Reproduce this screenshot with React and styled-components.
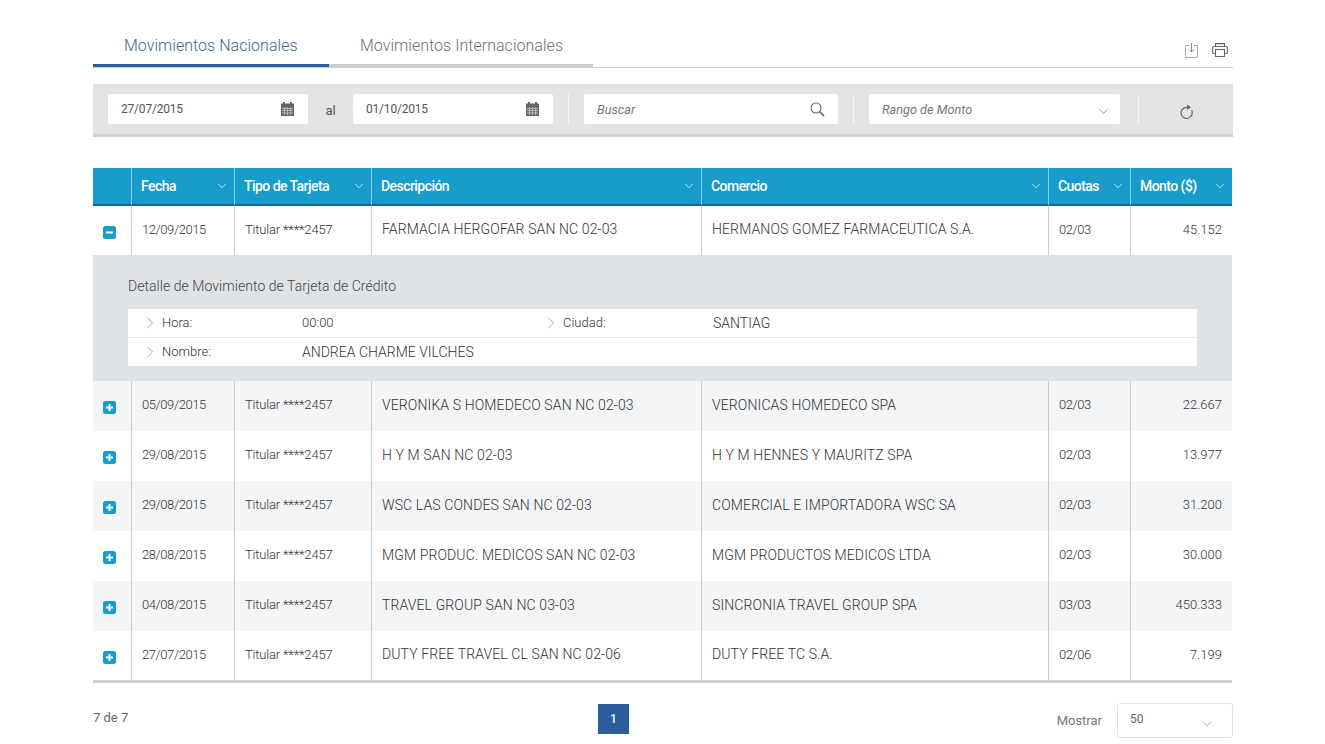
import styled, { createGlobalStyle } from 'styled-components';
import { ChevronDown, ChevronRight } from 'lucide-react';

const GlobalStyle = createGlobalStyle`
    body {
        margin: 0;
        background: #fff;
        font-family: Roboto, "Liberation Sans", sans-serif;
        color: #555;
    }
`;

const Page = styled.div`
    width: 1140px;
    margin-left: 93px;
    padding-top: 24px;
`;

const TabBar = styled.div`
    box-sizing: border-box;
    display: flex;
    height: 44px;
    border-bottom: 1px solid #ccc;
`;

const Tab = styled.div`
    box-sizing: border-box;
    width: ${(p) => p.$width}px;
    height: 43px;
    padding: 12px 0 0 31px;
    font-size: 16px;
    font-weight: 300;
    letter-spacing: 0.03px;
    color: ${(p) => (p.$active ? '#41648f' : '#6f6f6f')};
    border-bottom: 3px solid ${(p) => (p.$active ? '#2b5c97' : '#ccc')};
`;

const Tools = styled.div`
    display: flex;
    align-items: center;
    gap: 14px;
    margin-left: auto;
    padding: 9px 5px 0 0;
`;

const FilterBar = styled.div`
    box-sizing: border-box;
    display: flex;
    align-items: center;
    height: 53px;
    margin-top: 16px;
    padding: 0 15px;
    background: #e3e4e6;
    border-bottom: 3px solid #d0d0d0;
`;

const Field = styled.div`
    box-sizing: border-box;
    display: flex;
    align-items: center;
    justify-content: space-between;
    flex: 0 0 ${(p) => p.$width}px;
    height: 30px;
    padding: 0 ${(p) => p.$pad}px 0 13px;
    background: #fff;
    border-radius: 2px;
    font-size: 12px;
    letter-spacing: -0.2px;
    color: #555;
`;

const PlaceholderField = styled(Field)`
    font-size: 12.7px;
    font-style: italic;
    letter-spacing: 0;
    color: #777;
`;

const FieldChevron = styled(ChevronDown)`
    margin-top: 4px;
    color: #555;
`;

const Al = styled.span`
    width: 45px;
    text-align: center;
    font-size: 13px;
    padding-top: 2px;
`;

const Divider = styled.div`
    width: 1px;
    height: 30px;
    margin: 0 ${(p) => p.$right}px 0 ${(p) => p.$left}px;
    background: #f7f7f7;
`;

const Refresh = styled.div`
    display: flex;
    padding: 5px 0 0 40px;
`;

const Table = styled.table`
    width: 1139px;
    margin-top: 31px;
    table-layout: fixed;
    border-collapse: separate;
    border-spacing: 0;
    border-bottom: 3px solid #d0d0d0;
    font-size: 13px;
`;

const HeadCell = styled.th`
    box-sizing: border-box;
    height: 38px;
    padding: 0 5px 0 9px;
    background: #179ccb;
    border-bottom: 2px solid #1c5f9e;
    border-left: ${(p) => (p.$first ? 'none' : '1px solid #8ccfe6')};
    color: #fff;
    font-size: 14px;
    font-weight: 500;
    letter-spacing: -0.55px;
    text-align: left;
`;

const HeadLabel = styled.div`
    display: flex;
    align-items: center;
    justify-content: space-between;
`;

const Row = styled.tr`
    background: ${(p) => (p.$shaded ? '#f4f5f7' : '#fff')};
`;

const Cell = styled.td`
    box-sizing: border-box;
    height: ${(p) => p.$height}px;
    padding: 0 10px 3px;
    border-left: 1px solid #ccc;
    font-weight: 300;
    color: #333;
    white-space: nowrap;
`;

const DateCell = styled(Cell)`
    letter-spacing: -0.42px;
`;

const CardCell = styled(Cell)`
    letter-spacing: -0.18px;
`;

const NameCell = styled(Cell)`
    font-size: 14px;
    letter-spacing: 0.12px;
`;

const AmountCell = styled(Cell)`
    text-align: right;
`;

const ToggleCell = styled.td`
    padding: 3px 0 0 10px;
    line-height: 0;
`;

const DetailCell = styled.td`
    box-sizing: border-box;
    height: 126px;
    padding: 0 35px;
    background: #e0e3e6;
    vertical-align: top;
`;

const DetailTitle = styled.div`
    padding: 23px 0 15px;
    font-size: 14px;
    font-weight: 300;
    line-height: 16px;
    letter-spacing: 0.05px;
    color: #444;
`;

const DetailBox = styled.div`
    background: #fff;
`;

const DetailRow = styled.div`
    box-sizing: border-box;
    display: grid;
    grid-template-columns: 401px 1fr;
    height: 28px;
    padding-left: 12px;
    & + & {
        height: 29px;
        border-top: 1px solid #e3e4e6;
    }
`;

const DetailItem = styled.div`
    display: flex;
    align-items: center;
    gap: 2px;
    padding-bottom: 1px;
    color: #4a4a4a;
`;

const DetailLabel = styled.span`
    width: ${(p) => p.$width}px;
    font-weight: 300;
    color: #333;
`;

const DetailValue = styled.span`
    font-size: ${(p) => (p.$small ? 13 : 14)}px;
    font-weight: 300;
    color: #333;
`;

const Footer = styled.div`
    display: grid;
    grid-template-columns: 505px 31px 1fr;
    align-items: center;
    margin-top: 20px;
    font-size: 13px;
`;

const Count = styled.span`
    padding-bottom: 7px;
    color: #666;
`;

const PageButton = styled.div`
    display: flex;
    align-items: center;
    justify-content: center;
    align-self: start;
    height: 30px;
    margin-top: 1px;
    background: #2b5c9c;
    color: #fff;
    font-size: 12px;
    font-weight: 500;
`;

const ShowBox = styled.div`
    display: flex;
    align-items: center;
    justify-content: flex-end;
    gap: 15px;
    color: #777;
`;

const ShowSelect = styled.div`
    box-sizing: border-box;
    display: flex;
    justify-content: space-between;
    width: 116px;
    height: 35px;
    padding: 8px 18px 0 12px;
    border: 1px solid #e3e3e3;
    border-radius: 3px;
    font-size: 12px;
    color: #666;
`;

const SelectChevron = styled(ChevronDown)`
    margin-top: 5px;
`;

const columns = [
    { title: '', width: 38 },
    { title: 'Fecha', width: 103 },
    { title: 'Tipo de Tarjeta', width: 137 },
    { title: 'Descripción', width: 330 },
    { title: 'Comercio', width: 347 },
    { title: 'Cuotas', width: 82 },
    { title: 'Monto ($)', width: 102 },
];

const movements = [
    { date: '12/09/2015', desc: 'FARMACIA HERGOFAR SAN NC 02-03', shop: 'HERMANOS GOMEZ FARMACEUTICA S.A.', fees: '02/03', amount: '45.152', height: 49, open: true },
    { date: '05/09/2015', desc: 'VERONIKA S HOMEDECO SAN NC 02-03', shop: 'VERONICAS HOMEDECO SPA', fees: '02/03', amount: '22.667', height: 50, shaded: true },
    { date: '29/08/2015', desc: 'H Y M SAN NC 02-03', shop: 'H Y M HENNES Y MAURITZ SPA', fees: '02/03', amount: '13.977', height: 50 },
    { date: '29/08/2015', desc: 'WSC LAS CONDES SAN NC 02-03', shop: 'COMERCIAL E IMPORTADORA WSC SA', fees: '02/03', amount: '31.200', height: 50, shaded: true },
    { date: '28/08/2015', desc: 'MGM PRODUC. MEDICOS SAN NC 02-03', shop: 'MGM PRODUCTOS MEDICOS LTDA', fees: '02/03', amount: '30.000', height: 50 },
    { date: '04/08/2015', desc: 'TRAVEL GROUP SAN NC 03-03', shop: 'SINCRONIA TRAVEL GROUP SPA', fees: '03/03', amount: '450.333', height: 50, shaded: true },
    { date: '27/07/2015', desc: 'DUTY FREE TRAVEL CL SAN NC 02-06', shop: 'DUTY FREE TC S.A.', fees: '02/06', amount: '7.199', height: 49 },
];

function CalendarIcon() {
    return (
        <svg width="13" height="14" viewBox="0 0 13 14" fill="#666">
            <rect x="2" y="0" width="2" height="3" />
            <rect x="9" y="0" width="2" height="3" />
            <rect x="0" y="1.5" width="13" height="12.5" />
            <g fill="#cfcfcf">
                <rect x="1" y="6" width="11" height="0.7" />
                <rect x="1" y="8.3" width="11" height="0.7" />
                <rect x="1" y="10.6" width="11" height="0.7" />
                <rect x="3" y="5" width="0.7" height="8" />
                <rect x="6.2" y="5" width="0.7" height="8" />
                <rect x="9.4" y="5" width="0.7" height="8" />
            </g>
        </svg>
    );
}

function SearchIcon() {
    return (
        <svg width="15" height="15" viewBox="0 0 15 15" fill="none" stroke="#666">
            <circle cx="6" cy="6" r="5" strokeWidth="1.1" />
            <path d="M9.7 9.7L14 14" strokeWidth="1.7" />
        </svg>
    );
}

function RefreshIcon() {
    return (
        <svg width="13" height="15" viewBox="0 0 13 15" fill="none" stroke="#666" strokeWidth="1.2">
            <path d="M7 3.3A5.6 5.6 0 1 0 11.6 6.3" />
            <path d="M7 0.5L11 3.3L7 6Z" fill="#666" stroke="none" />
        </svg>
    );
}

function DownloadIcon() {
    return (
        <svg width="13" height="15" viewBox="0 0 13 15" fill="none" stroke="#aaa">
            <path d="M4 2.5H0.5V14.5H12.5V2.5H9" />
            <path d="M6.5 0V9M4 6.5L6.5 9L9 6.5" stroke="#888" />
        </svg>
    );
}

function PrintIcon() {
    return (
        <svg width="16" height="14" viewBox="0 0 16 14" fill="none" stroke="#666" strokeWidth="1.1">
            <path d="M3.5 3.5V0.6H12.5V3.5" />
            <path d="M3.5 10.5H1.5A1 1 0 0 1 0.6 9.5V4.5A1 1 0 0 1 1.5 3.5H14.5A1 1 0 0 1 15.4 4.5V9.5A1 1 0 0 1 14.5 10.5H12.5" />
            <rect x="3.5" y="6.5" width="9" height="7" />
        </svg>
    );
}

function ToggleIcon({ open }) {
    return (
        <svg width="13" height="13" viewBox="0 0 13 13">
            <rect width="13" height="13" rx="2.5" fill="#179ccb" />
            <rect x="3" y="5.5" width="7" height="2" fill="#fff" />
            {!open && <rect x="5.5" y="3" width="2" height="7" fill="#fff" />}
        </svg>
    );
}

function DetailEntry({ label, labelWidth, value, small }) {
    return (
        <DetailItem>
            <ChevronRight size={20} strokeWidth={0.8} color="#179ccb" />
            <DetailLabel $width={labelWidth}>{label}</DetailLabel>
            <DetailValue $small={small}>{value}</DetailValue>
        </DetailItem>
    );
}

function MovementRows({ movement }) {
    const { date, desc, shop, fees, amount, height, open, shaded } = movement;
    return (
        <>
            <Row $shaded={shaded}>
                <ToggleCell><ToggleIcon open={open} /></ToggleCell>
                <DateCell $height={height}>{date}</DateCell>
                <CardCell $height={height}>Titular ****2457</CardCell>
                <NameCell $height={height}>{desc}</NameCell>
                <NameCell $height={height}>{shop}</NameCell>
                <DateCell $height={height}>{fees}</DateCell>
                <AmountCell $height={height}>{amount}</AmountCell>
            </Row>
            {open && (
                <tr>
                    <DetailCell colSpan={7}>
                        <DetailTitle>Detalle de Movimiento de Tarjeta de Crédito</DetailTitle>
                        <DetailBox>
                            <DetailRow>
                                <DetailEntry label="Hora:" labelWidth={138} value="00:00" small />
                                <DetailEntry label="Ciudad:" labelWidth={148} value="SANTIAG" />
                            </DetailRow>
                            <DetailRow>
                                <DetailEntry label="Nombre:" labelWidth={138} value="ANDREA CHARME VILCHES" />
                            </DetailRow>
                        </DetailBox>
                    </DetailCell>
                </tr>
            )}
        </>
    );
}

export default function App() {
    return (
        <Page>
            <GlobalStyle />
            <TabBar>
                <Tab $active $width={236}>Movimientos Nacionales</Tab>
                <Tab $width={264}>Movimientos Internacionales</Tab>
                <Tools>
                    <DownloadIcon />
                    <PrintIcon />
                </Tools>
            </TabBar>
            <FilterBar>
                <Field $width={200} $pad={14}>27/07/2015 <CalendarIcon /></Field>
                <Al>al</Al>
                <Field $width={200} $pad={14}>01/10/2015 <CalendarIcon /></Field>
                <Divider $left={15} $right={15} />
                <PlaceholderField $width={254} $pad={13}>Buscar <SearchIcon /></PlaceholderField>
                <Divider $left={15} $right={15} />
                <PlaceholderField $width={251} $pad={9}>Rango de Monto <FieldChevron size={15} strokeWidth={1} /></PlaceholderField>
                <Divider $left={18} $right={1} />
                <Refresh><RefreshIcon /></Refresh>
            </FilterBar>
            <Table>
                <colgroup>
                    {columns.map((c) => <col key={c.title} width={c.width} />)}
                </colgroup>
                <thead>
                    <tr>
                        {columns.map((c, i) => (
                            <HeadCell key={c.title} $first={i === 0}>
                                {c.title && (
                                    <HeadLabel>
                                        {c.title}
                                        <ChevronDown size={14} strokeWidth={1.2} />
                                    </HeadLabel>
                                )}
                            </HeadCell>
                        ))}
                    </tr>
                </thead>
                <tbody>
                    {movements.map((m) => (
                        <MovementRows key={m.desc} movement={m} />
                    ))}
                </tbody>
            </Table>
            <Footer>
                <Count>7 de 7</Count>
                <PageButton>1</PageButton>
                <ShowBox>
                    Mostrar
                    <ShowSelect>50 <SelectChevron size={14} strokeWidth={1} /></ShowSelect>
                </ShowBox>
            </Footer>
        </Page>
    );
}
